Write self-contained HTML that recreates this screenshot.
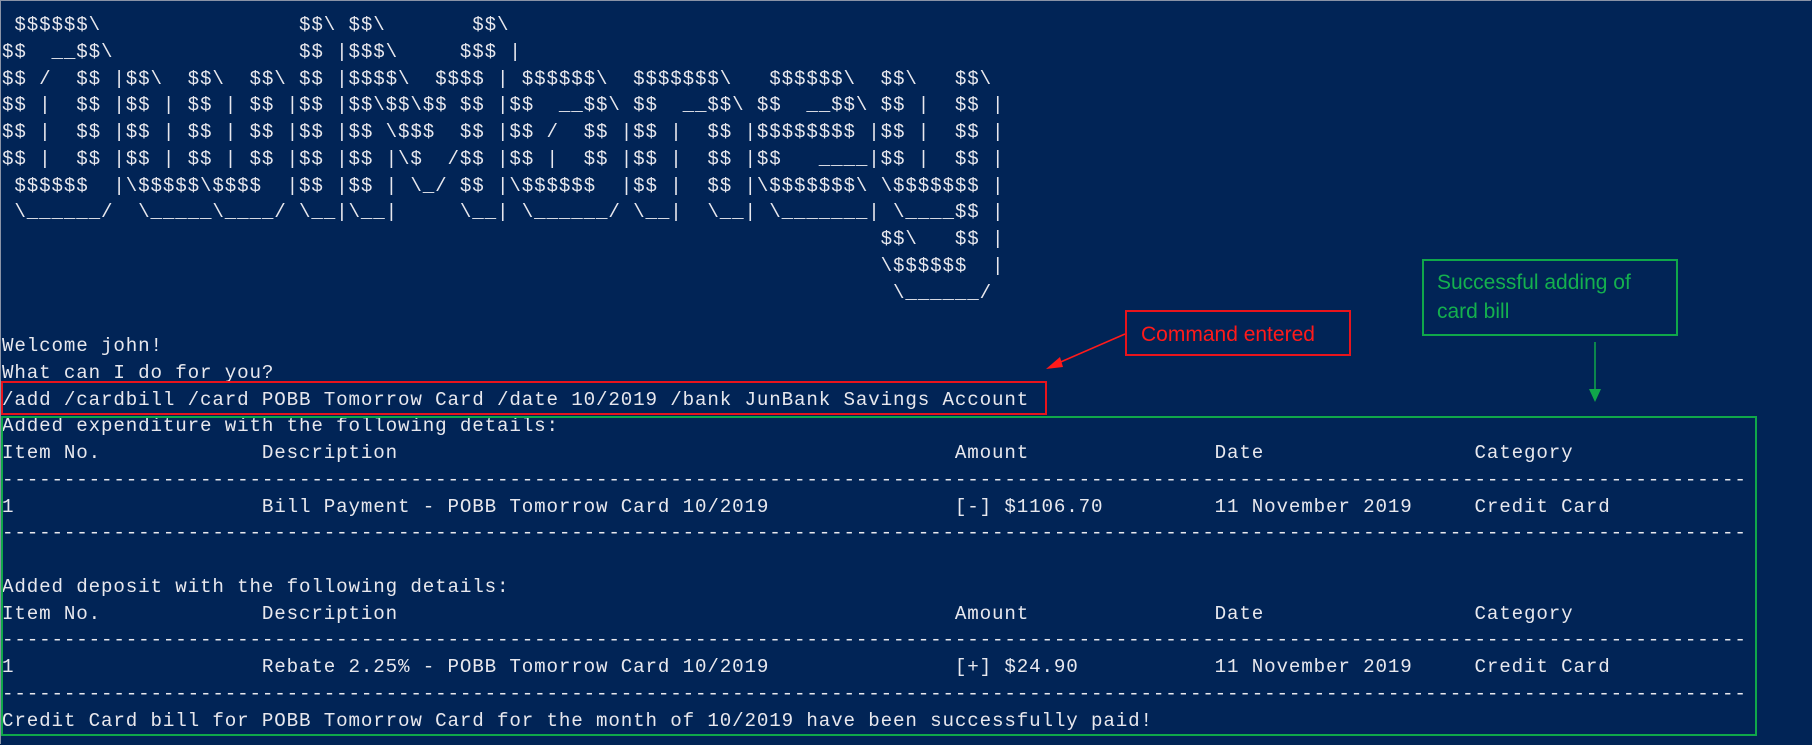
<!DOCTYPE html>
<html><head><meta charset="utf-8"><style>
html,body{margin:0;padding:0;}
body{width:1812px;height:745px;background:#012456;position:relative;overflow:hidden;}
.frame{position:absolute;left:0;top:0;width:1810px;height:743px;border:1px solid #8a93a6;border-right:none;border-bottom:none;}
pre{position:absolute;left:2px;top:12px;margin:0;font-family:"Liberation Mono",monospace;font-size:19.2px;letter-spacing:0.86px;line-height:26.75px;color:#e8e8ee;white-space:pre;}
.box{position:absolute;box-sizing:border-box;}
.lbl{font-family:"Liberation Sans",sans-serif;font-size:21px;line-height:29px;}
</style></head><body>
<div class="frame"></div>
<pre> $$$$$$\                $$\ $$\       $$\
$$  __$$\               $$ |$$$\     $$$ |
$$ /  $$ |$$\  $$\  $$\ $$ |$$$$\  $$$$ | $$$$$$\  $$$$$$$\   $$$$$$\  $$\   $$\
$$ |  $$ |$$ | $$ | $$ |$$ |$$\$$\$$ $$ |$$  __$$\ $$  __$$\ $$  __$$\ $$ |  $$ |
$$ |  $$ |$$ | $$ | $$ |$$ |$$ \$$$  $$ |$$ /  $$ |$$ |  $$ |$$$$$$$$ |$$ |  $$ |
$$ |  $$ |$$ | $$ | $$ |$$ |$$ |\$  /$$ |$$ |  $$ |$$ |  $$ |$$   ____|$$ |  $$ |
 $$$$$$  |\$$$$$\$$$$  |$$ |$$ | \_/ $$ |\$$$$$$  |$$ |  $$ |\$$$$$$$\ \$$$$$$$ |
 \______/  \_____\____/ \__|\__|     \__| \______/ \__|  \__| \_______| \____$$ |
                                                                       $$\   $$ |
                                                                       \$$$$$$  |
                                                                        \______/

Welcome john!
What can I do for you?
/add /cardbill /card POBB Tomorrow Card /date 10/2019 /bank JunBank Savings Account
Added expenditure with the following details:
Item No.             Description                                             Amount               Date                 Category
---------------------------------------------------------------------------------------------------------------------------------------------
1                    Bill Payment - POBB Tomorrow Card 10/2019               [-] $1106.70         11 November 2019     Credit Card
---------------------------------------------------------------------------------------------------------------------------------------------

Added deposit with the following details:
Item No.             Description                                             Amount               Date                 Category
---------------------------------------------------------------------------------------------------------------------------------------------
1                    Rebate 2.25% - POBB Tomorrow Card 10/2019               [+] $24.90           11 November 2019     Credit Card
---------------------------------------------------------------------------------------------------------------------------------------------
Credit Card bill for POBB Tomorrow Card for the month of 10/2019 have been successfully paid!</pre>
<div class="box" style="left:1px;top:381px;width:1046px;height:34px;border:2px solid #e8141c;"></div>
<div class="box" style="left:1px;top:416px;width:1756px;height:320px;border:2px solid #10a74a;"></div>
<div class="box lbl" style="left:1125px;top:310px;width:226px;height:46px;border:2px solid #e8141c;color:#ff1a1a;padding:8px 0 0 14px;">Command entered</div>
<div class="box lbl" style="left:1422px;top:259px;width:256px;height:77px;border:2px solid #10a74a;color:#14b04e;padding:7px 0 0 13px;">Successful adding of<br>card bill</div>
<svg style="position:absolute;left:0;top:0" width="1812" height="745">
<line x1="1125" y1="334" x2="1056" y2="364" stroke="#ff1a1a" stroke-width="1.5"/>
<polygon points="1046,369 1060,357 1063,367" fill="#ff1a1a"/>
<line x1="1595" y1="342" x2="1595" y2="390" stroke="#10a74a" stroke-width="1.5"/>
<polygon points="1589,389 1601,389 1595,402" fill="#10a74a"/>
</svg>
</body></html>
